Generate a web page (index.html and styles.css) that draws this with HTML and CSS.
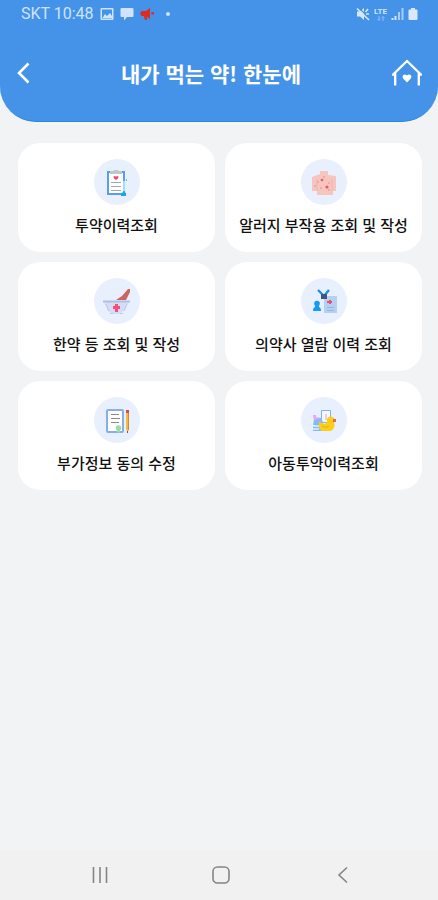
FILE: index.html
```html
<!DOCTYPE html>
<html lang="ko">
<head>
<meta charset="utf-8">
<meta name="viewport" content="width=device-width, initial-scale=1">
<title>내가 먹는 약! 한눈에</title>
<link rel="stylesheet" href="styles.css">
</head>
<body>
<div class="app">
  <header class="header">
    <div class="status">
      <div class="status-group">
        <span class="carrier">SKT 10:48</span>
        <svg width="14" height="14" viewBox="0 0 14 14"><path fill="#cfe3fa" fill-rule="evenodd" d="M1.500 1h11q1 0 1 1v10q0 1-1 1h-11q-1 0-1-1V2q0-1 1-1zM2 2.500v9h10v-9z"/><path fill="#cfe3fa" d="M2.500 11l2.500-4 2 2 3-3 2 3v2z"/></svg>
        <svg width="14" height="14" viewBox="0 0 14 14"><path fill="#cfe3fa" d="M1.500 1h11q1 0 1 1v7q0 1-1 1H7l-3 3.500V10H1.500q-1 0-1-1V2q0-1 1-1z"/></svg>
        <svg width="14" height="14" viewBox="0 0 14 14"><path fill="#dd2b20" d="M10 1v11L6.500 9.500l.8 3.300-2.300.2-1.300-4H1.500L0 6.500 1.500 4H6zM11.200 5.500L14 5v2.500l-2.800-.3z"/></svg>
        <span class="dot"></span>
      </div>
      <div class="status-group status-right">
        <svg width="14" height="14" viewBox="0 0 14 14"><path fill="#d5e7fb" d="M1 4.500h3L8 1v12L4 9.500H1z"/><path d="M3 1l11 11" stroke="#4593e8" stroke-width="1.200"/><path d="M1 1.500l12 11.500M9.500 5l2.500-3M10 7h3" stroke="#d5e7fb" stroke-width="1.600"/></svg>
        <span class="network"><span>LTE</span><svg width="10" height="5" viewBox="0 0 10 5"><path d="M3 0v4M1.500 3L3 4.500 4.500 3M7 5V1M5.500 2L7 .5 8.500 2" fill="none" stroke="#90bff1"/></svg></span>
        <svg width="13" height="14" viewBox="0 0 13 14"><path d="M1.500 13v-2M4.500 13V9" stroke="#d5e7fb" stroke-width="2"/><path d="M8 13V5M11.500 13V1" stroke="#a9cef5" stroke-width="2"/></svg>
        <svg width="10" height="14" viewBox="0 0 10 14"><path fill="#d9e9fb" d="M3 1h4v1.500h1.500q1 0 1 1V12q0 1-1 1h-7q-1 0-1-1V3.500q0-1 1-1H3z"/></svg>
      </div>
    </div>
    <div class="titlebar">
      <button class="back-button" type="button" aria-label="뒤로"><svg width="20" height="30" viewBox="0 0 20 30"><path d="M18.500 5.500L9 15l9.500 9.500" fill="none" stroke="#fff" stroke-width="2.600"/></svg></button>
      <h1>내가 먹는 약! 한눈에</h1>
      <button class="home-button" type="button" aria-label="홈"><svg width="30" height="30" viewBox="0 0 30 30"><path d="M3.200 27.500V16.500H1.200L15 3l13.800 13.500h-2v11" fill="none" stroke="#fff" stroke-width="2.300"/><path fill="#fff" d="M15 24.500l-3.800-4q-1.500-2 .1-3.500 2-1.400 3.700.6 1.700-2 3.700-.6 1.600 1.500.1 3.500z"/></svg></button>
    </div>
  </header>

  <main class="menu">
    <a class="card" href="#medication">
      <span class="badge"><svg viewBox="0 0 46 46"><path fill="#5b9ded" d="M13 12h18v24H13z"/><path fill="#fff" d="M15 14h14v20H15z"/><path fill="#bcc9cd" d="M16 12h3l1-1h4l1 1h3v3H16z"/><path fill="#ef4562" d="M22 21l-2.300-2V17l2.300.5 2.300-.5v2z"/><path d="M17 23.500h10M17 27.500h10M17 31.500h10" stroke="#a5a6aa"/><path d="M30 22v10" stroke="#9ce0ff" stroke-width="2"/><path fill="#1ba4ed" d="M27 34l3-1 2 1v3h-5z"/><path fill="#5ccfc7" d="M32 20h1v2h-1z"/></svg></span>
      <span class="label">투약이력조회</span>
    </a>
    <a class="card" href="#allergy">
      <span class="badge"><svg viewBox="0 0 46 46"><path fill="#f6c5bd" d="M19 12h8v4l8 1v15h-3v4H16v-4h-5V18l8-3z"/><path d="M16 20v12M31 20v12" stroke="#f1b4aa"/><g fill="#eda29b"><circle cx="17" cy="23" r="1"/><circle cx="23" cy="18" r="1"/><circle cx="28" cy="24" r="1"/><circle cx="20" cy="29" r="1"/><circle cx="14" cy="27" r="1"/><circle cx="28" cy="31" r="1"/></g><circle cx="21" cy="21" r="1.300" fill="#dd5d6c"/><circle cx="26" cy="28" r="1.600" fill="#dd5d6c"/></svg></span>
      <span class="label">알러지 부작용 조회 및 작성</span>
    </a>
    <a class="card" href="#herbal">
      <span class="badge"><svg viewBox="0 0 46 46"><path fill="#c96660" d="M22 22l6-4 6-7h2v3l-4 8z"/><path fill="#d4ddf4" d="M10 24h25l-5 9-3 1v2H17v-2l-3-1z"/><path d="M9 23.500h27" stroke="#b2bfe4" stroke-width="2"/><path d="M12 26l3 7M33 26l-3 7M16 35.500h3M26 35.500h3" stroke="#bdc8e5"/><path fill="#f94c78" d="M21 26h3v2h2v3h-2v3h-3v-3h-2v-3h2z"/></svg></span>
      <span class="label">한약 등 조회 및 작성</span>
    </a>
    <a class="card" href="#access">
      <span class="badge"><svg viewBox="0 0 46 46"><path fill="#b5d0f1" d="M23 18h13v17H23z"/><path d="M17 12l6 6 5-6" fill="none" stroke="#168fed" stroke-width="2.300"/><path fill="#3d5684" d="M20 16h6v5h-6z"/><path d="M26 29.500h7M26 32.500h7" stroke="#93b6e2"/><path fill="#eb4f72" d="M28 22h2v1h1v2h-1v1h-2v-1h-2v-2h2z"/><circle cx="16" cy="25.500" r="2.800" fill="#149bf3"/><path fill="#149bf3" d="M14 26h4v3q2 .5 2 4h-8q0-3.500 2-4z"/></svg></span>
      <span class="label">의약사 열람 이력 조회</span>
    </a>
    <a class="card" href="#consent">
      <span class="badge"><svg viewBox="0 0 46 46"><rect x="13" y="13" width="16" height="22" rx="1" fill="#fff" stroke="#86afea" stroke-width="2"/><path d="M17 17.500h8M17 21.500h9M17 25.500h8" stroke="#858991"/><circle cx="24.500" cy="31" r="2.800" fill="#9ddda5"/><path fill="#9ddda5" d="M23 33h3v3l-1.500-1-1.500 1z"/><path fill="#f7b83b" d="M32 16h3v16l-1.500 4-1.500-4z"/><path d="M34.500 16v17" stroke="#d08a31"/><path fill="#dc445c" d="M32 13h3v3h-3z"/><path fill="#75535a" d="M33 34h1v2h-1z"/></svg></span>
      <span class="label">부가정보 동의 수정</span>
    </a>
    <a class="card" href="#child">
      <span class="badge"><svg viewBox="0 0 46 46"><path fill="#f4f7ff" stroke="#7fb1f1" d="M20.500 13.500h9v12h-9z"/><path d="M25 17v6" stroke="#ecd0d3" stroke-width="2"/><path fill="#e5a9f2" d="M12 18h3v2l5 1v3h-7z"/><path fill="#85baf8" d="M13 23l7-2 2 4v9H12v-4l3-2h-3z"/><path d="M13 29h5M12 32h6" stroke="#d7f3ff" stroke-width="1.500"/><path fill="#fecd18" d="M18 25l6 2 2-2q-1-5 3.500-5.500Q35 20 33 25q2 6-3 9h-9q-4-2-3-9z"/><path fill="#f16743" d="M32 22h3v3h-3z"/><path d="M21 29q3 3 7 0" fill="none" stroke="#e9ae12"/></svg></span>
      <span class="label">아동투약이력조회</span>
    </a>
  </main>

  <nav class="system-nav" aria-label="시스템 탐색">
    <button type="button" aria-label="최근 앱"><svg width="20" height="20" viewBox="0 0 20 20"><path d="M3.500 2v16M10 2v16M16.500 2v16" stroke="#858585" stroke-width="1.600"/></svg></button>
    <button type="button" aria-label="홈 화면"><svg width="20" height="20" viewBox="0 0 20 20"><rect x="2" y="2" width="16" height="16" rx="4.500" fill="none" stroke="#858585" stroke-width="1.600"/></svg></button>
    <button type="button" aria-label="이전"><svg width="20" height="20" viewBox="0 0 20 20"><path d="M14 2.500L6 10l8 7.500" fill="none" stroke="#858585" stroke-width="1.600"/></svg></button>
  </nav>
</div>
</body>
</html>
```
FILE: styles.css
```css
* {
  box-sizing: border-box;
}

body {
  margin: 0;
  background: #f1f3f5;
  font-family: "Noto Sans CJK KR", sans-serif;
  color: #111;
}

svg {
  display: block;
}

button {
  border: 0;
  padding: 0;
  background: none;
  cursor: pointer;
}

.app {
  display: flex;
  flex-direction: column;
  min-height: 100vh;
}

.header {
  padding-bottom: 33px;
  border-bottom: 1px solid #2588dc;
  border-radius: 0 0 36px 36px;
  background: #4593e8;
}

.status {
  display: flex;
  justify-content: space-between;
  align-items: center;
  height: 28px;
  padding: 0 20px 0 21px;
}

.status-group {
  display: flex;
  align-items: center;
  gap: 6px;
}

.status-right {
  gap: 4px;
}

.carrier {
  font-family: Roboto, sans-serif;
  font-size: 16px;
  line-height: 20px;
  color: #cfe3fa;
}

.dot {
  width: 4px;
  height: 4px;
  margin-left: 6px;
  border-radius: 50%;
  background: #cfe3fa;
}

.network {
  display: flex;
  flex-direction: column;
  align-items: center;
  font-family: Roboto, sans-serif;
  font-size: 8px;
  font-weight: 700;
  line-height: 8px;
  color: #cfe3fa;
}

.titlebar {
  display: flex;
  justify-content: space-between;
  align-items: center;
  padding: 30px 16px 0 10px;
}

.back-button {
  width: 20px;
  height: 30px;
}

.home-button {
  width: 30px;
  height: 30px;
}

.titlebar h1 {
  margin: 0;
  font-size: 21px;
  font-weight: 700;
  line-height: 30px;
  color: #fff;
}

.menu {
  display: grid;
  grid-template-columns: 1fr 1fr;
  gap: 10px;
  padding: 21px 16px 21px 18px;
}

.card {
  display: flex;
  flex-direction: column;
  align-items: center;
  gap: 8px;
  padding: 16px 4px 15px;
  border-radius: 22px;
  background: #fff;
  color: inherit;
  text-decoration: none;
}

.badge {
  width: 46px;
  height: 46px;
  border-radius: 50%;
  background: #e8effd;
}

.label {
  font-size: 15px;
  font-weight: 500;
  line-height: 24px;
  white-space: nowrap;
}

.system-nav {
  display: grid;
  grid-template-columns: repeat(3, 28%);
  justify-content: center;
  justify-items: center;
  align-items: center;
  height: 50px;
  margin-top: auto;
  padding-left: 5px;
  background: #f1f1f1;
}
```
